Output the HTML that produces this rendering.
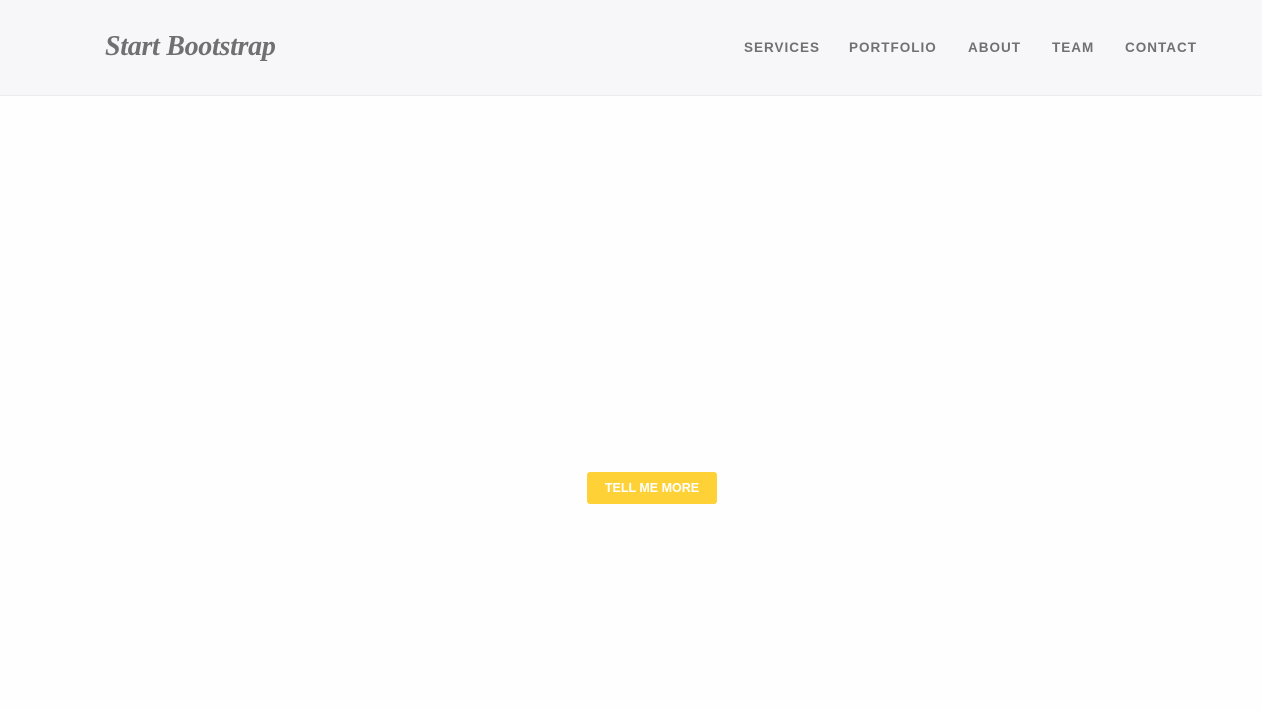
<!DOCTYPE html>
<html><head><style>
body{margin:0;width:1262px;height:710px;background:#fefefe;font-family:"Liberation Sans",sans-serif;overflow:hidden;position:relative}
.nav{position:absolute;left:0;top:0;width:1262px;height:95px;background:#f7f6f8;border-bottom:1px solid #ececec}
.logo{position:absolute;left:105px;top:31px;font-family:"Liberation Serif",serif;font-style:italic;font-weight:bold;font-size:28px;color:#707073;letter-spacing:-0.3px}
.links a{position:absolute;top:40px;font-size:13.5px;font-weight:bold;color:#717175;letter-spacing:1px;text-decoration:none}
.btn{position:absolute;left:587px;top:472px;width:130px;height:32px;background:#fed136;border-radius:3px;color:#fff;font-weight:bold;font-size:12.5px;text-align:center;line-height:32px}
</style></head><body>
<div class="nav">
<div class="logo">Start Bootstrap</div>
<div class="links">
<a style="left:744px">SERVICES</a>
<a style="left:849px">PORTFOLIO</a>
<a style="left:968px">ABOUT</a>
<a style="left:1052px">TEAM</a>
<a style="left:1125px">CONTACT</a>
</div></div>
<div class="btn">TELL ME MORE</div>
</body></html>
